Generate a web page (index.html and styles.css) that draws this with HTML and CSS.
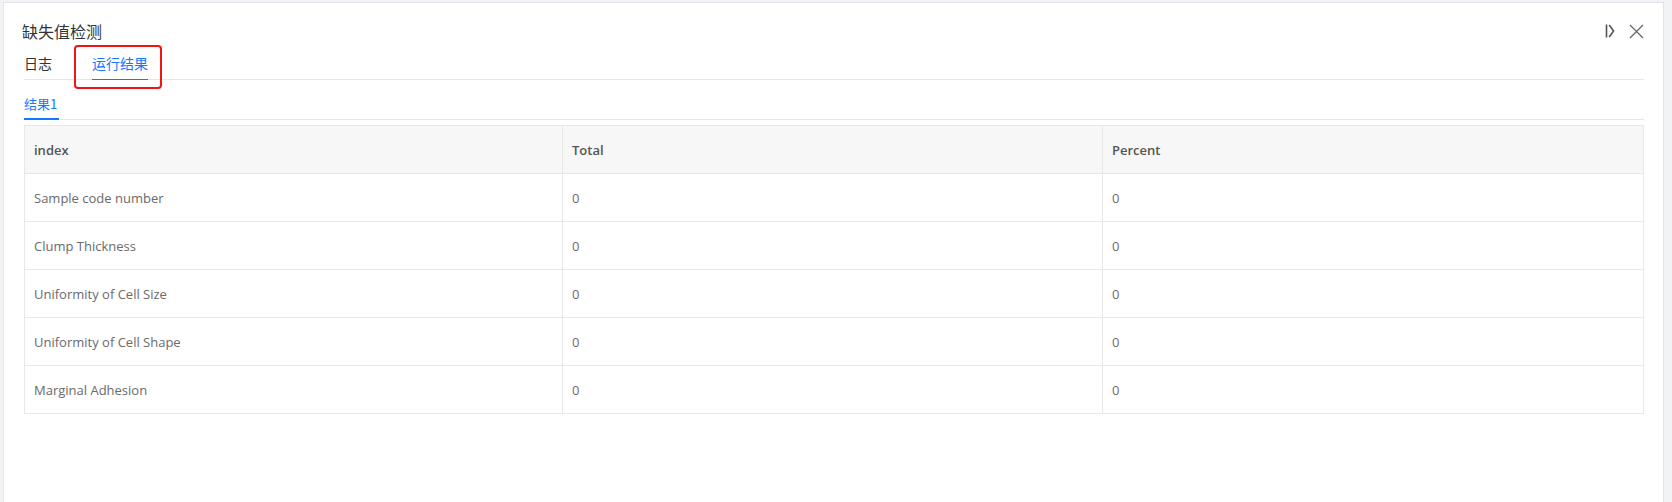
FILE: index.html
```html
<!DOCTYPE html>
<html lang="zh">
<head>
<meta charset="utf-8">
<title>缺失值检测</title>
<link rel="stylesheet" href="styles.css">
</head>
<body>
<div class="page">
  <div class="panel">
    <div class="head">
      <div class="title">缺失值检测</div>
      <div class="tools">
        <svg class="ico-collapse" width="10" height="14" viewBox="0 0 10 14"><path d="M1.5 0.5V13.5" stroke="#555" stroke-width="1.6" fill="none"/><path d="M4.2 1L8.6 7L4.2 13" stroke="#555" stroke-width="1.6" fill="none"/></svg>
        <svg class="ico-close" width="15" height="15" viewBox="0 0 15 15"><path d="M1 1L14 14M14 1L1 14" stroke="#666" stroke-width="1.3" fill="none"/></svg>
      </div>
    </div>
    <div class="tabs">
      <div class="tab">日志</div>
      <div class="tab active">运行结果<span class="mark"></span><span class="highlight"></span></div>
    </div>
    <div class="subtabs">
      <div class="subtab active">结果1</div>
    </div>
    <table class="grid">
      <thead>
        <tr><th>index</th><th>Total</th><th>Percent</th></tr>
      </thead>
      <tbody>
        <tr><td>Sample code number</td><td>0</td><td>0</td></tr>
        <tr><td>Clump Thickness</td><td>0</td><td>0</td></tr>
        <tr><td>Uniformity of Cell Size</td><td>0</td><td>0</td></tr>
        <tr><td>Uniformity of Cell Shape</td><td>0</td><td>0</td></tr>
        <tr><td>Marginal Adhesion</td><td>0</td><td>0</td></tr>
      </tbody>
    </table>
  </div>
</div>
</body>
</html>
```
FILE: styles.css
```css
html, body {
  margin: 0;
  padding: 0;
}
body {
  background: #f2f3f5;
  font-family: "Open Sans", "Noto Sans CJK SC", sans-serif;
  width: 1672px;
  height: 502px;
  overflow: hidden;
}
.page {
  padding: 2px 0 0 3px;
}
.panel {
  width: 1620px;
  height: 500px;
  background: #fff;
  border: 1px solid #e1e3e8;
  padding: 0 19px 0 20px;
  box-sizing: content-box;
}
.head {
  display: flex;
  align-items: center;
  justify-content: space-between;
  height: 24px;
  margin-top: 16px;
}
.title {
  font-family: "Noto Sans CJK SC", sans-serif;
  font-size: 16px;
  color: #333;
  margin-left: -2px;
  line-height: 24px;
}
.tools {
  display: flex;
  align-items: center;
  gap: 14px;
  margin-right: 0;
}
.ico-collapse, .ico-close {
  display: block;
}
.tabs {
  display: flex;
  gap: 40px;
  margin-top: 9px;
  border-bottom: 1px solid #e4e7ed;
}
.tab {
  position: relative;
  font-family: "Noto Sans CJK SC", sans-serif;
  font-size: 14px;
  line-height: 22px;
  color: #333;
  padding-bottom: 5px;
}
.tab.active {
  color: #1677ff;
}
.tab .mark {
  position: absolute;
  left: 0;
  right: 0;
  bottom: -1px;
  height: 1px;
  background: #1677ff;
}
.tab .highlight {
  position: absolute;
  left: -18px;
  top: -7px;
  width: 88px;
  height: 44px;
  border: 2px solid #f01414;
  border-radius: 4px;
  box-sizing: border-box;
}
.subtabs {
  display: flex;
  margin-top: 14px;
  border-bottom: 1px solid #e1e6f0;
}
.subtab {
  font-family: "Noto Sans CJK SC", sans-serif;
  font-size: 13px;
  line-height: 20px;
  color: #1677ff;
  padding: 0 2px 4px 0;
  margin-bottom: -1px;
  border-bottom: 2px solid #1677ff;
}
.grid {
  margin-top: 5px;
  width: 1620px;
  border-collapse: collapse;
  table-layout: fixed;
  font-size: 13px;
}
.grid th, .grid td {
  border: 1px solid #e8e8e8;
  height: 48px;
  padding: 0 9px;
  text-align: left;
  box-sizing: border-box;
}
.grid th {
  background: #f7f7f7;
  color: #555;
  font-weight: 600;
}
.grid td {
  color: #6a6a6a;
}
.grid th:nth-child(1) { width: 538px; }
.grid th:nth-child(2) { width: 540px; }
```
